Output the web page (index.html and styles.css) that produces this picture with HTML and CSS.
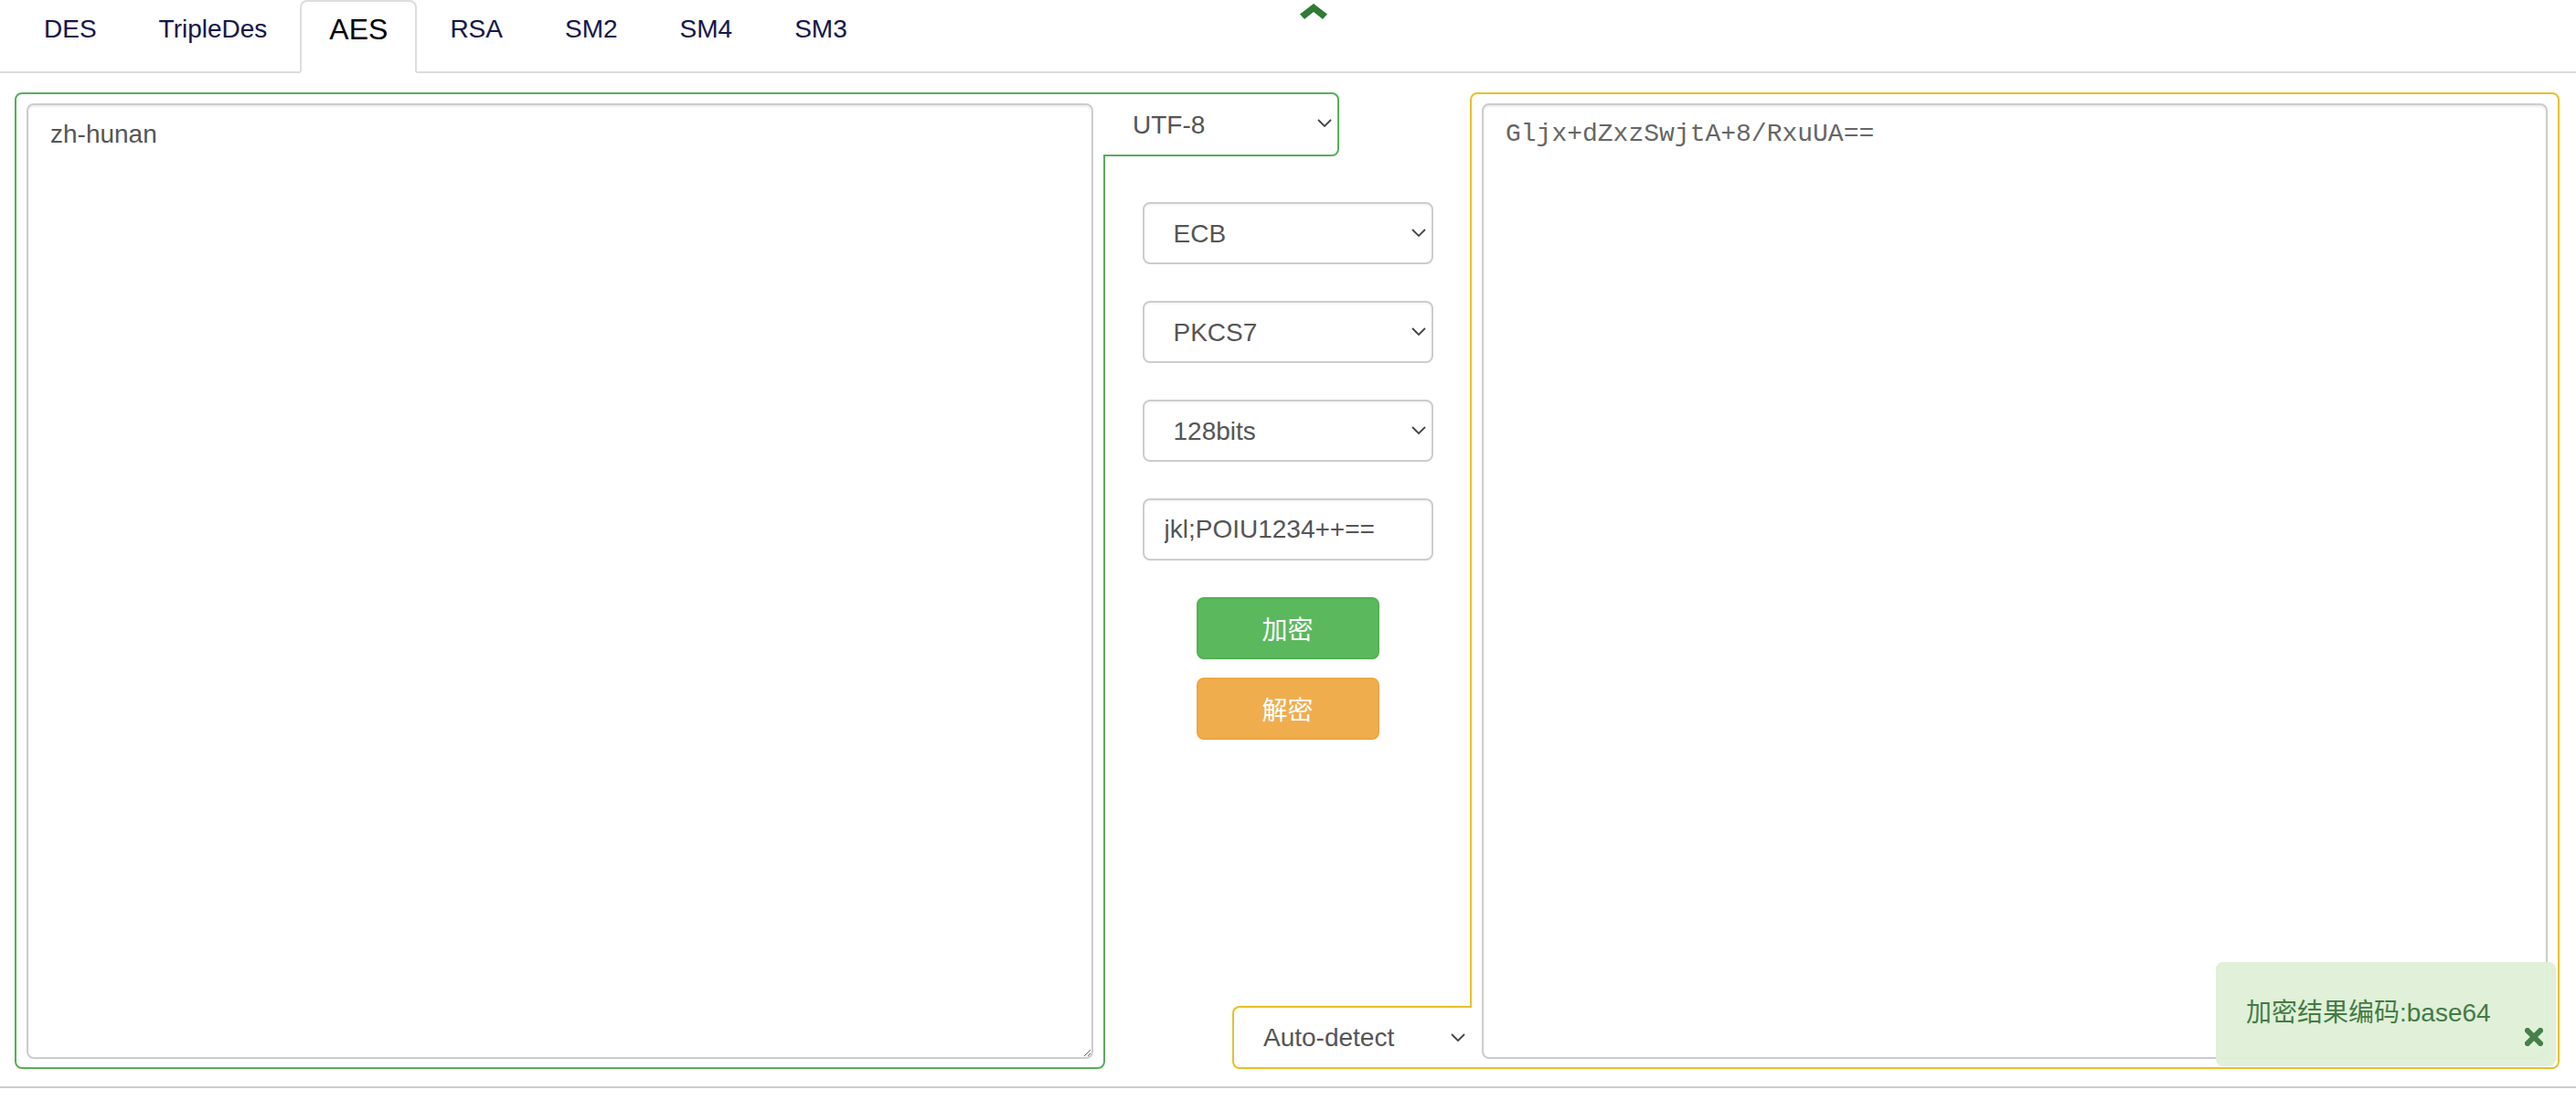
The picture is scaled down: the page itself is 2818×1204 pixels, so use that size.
FILE: index.html
```html
<!DOCTYPE html>
<html lang="zh-CN">
<head>
<meta charset="utf-8">
<title>AES</title>
<link rel="stylesheet" href="styles.css">
</head>
<body>
<nav class="tabs">
  <ul class="tab-list">
    <li class="tab"><a href="#">DES</a></li>
    <li class="tab"><a href="#">TripleDes</a></li>
    <li class="tab active"><a href="#">AES</a></li>
    <li class="tab"><a href="#">RSA</a></li>
    <li class="tab"><a href="#">SM2</a></li>
    <li class="tab"><a href="#">SM4</a></li>
    <li class="tab"><a href="#">SM3</a></li>
  </ul>
</nav>
<a class="collapse-toggle" href="#" aria-label="collapse">
  <svg viewBox="0 0 30 17" width="30" height="17"><polygon points="15,0 30,11.5 25,17 15,9 5,17 0,11.5" fill="#2f7a35"/></svg>
</a>

<main class="workspace">
  <section class="pane pane-in">
    <textarea class="text-area">zh-hunan</textarea>
  </section>

  <section class="controls">
    <div class="select-box charset">
      <select class="select"><option>UTF-8</option></select>
      <svg class="caret" viewBox="0 0 16 10"><polyline points="1,1 8,8 15,1" fill="none" stroke="#444" stroke-width="1.8"/></svg>
    </div>

    <div class="params">
      <div class="select-box field">
        <select class="select"><option>ECB</option></select>
        <svg class="caret" viewBox="0 0 16 10"><polyline points="1,1 8,8 15,1" fill="none" stroke="#444" stroke-width="1.8"/></svg>
      </div>
      <div class="select-box field">
        <select class="select"><option>PKCS7</option></select>
        <svg class="caret" viewBox="0 0 16 10"><polyline points="1,1 8,8 15,1" fill="none" stroke="#444" stroke-width="1.8"/></svg>
      </div>
      <div class="select-box field">
        <select class="select"><option>128bits</option></select>
        <svg class="caret" viewBox="0 0 16 10"><polyline points="1,1 8,8 15,1" fill="none" stroke="#444" stroke-width="1.8"/></svg>
      </div>
      <input class="field text-input" type="text" value="jkl;POIU1234++==">
      <div class="buttons">
        <button class="btn btn-encrypt" type="button">加密</button>
        <button class="btn btn-decrypt" type="button">解密</button>
      </div>
    </div>

    <div class="select-box detect">
      <select class="select"><option>Auto-detect</option></select>
      <svg class="caret" viewBox="0 0 16 10"><polyline points="1,1 8,8 15,1" fill="none" stroke="#444" stroke-width="1.8"/></svg>
    </div>
  </section>

  <section class="pane pane-out">
    <textarea class="text-area mono">Gljx+dZxzSwjtA+8/RxuUA==</textarea>
  </section>
</main>

<hr class="divider">

<div class="toast">
  <span class="toast-text">加密结果编码:base64</span>
  <svg class="toast-close" viewBox="0 0 20 20" width="20" height="20"><path d="M3 3 L17 17 M17 3 L3 17" stroke="#3f7a43" stroke-width="6" stroke-linecap="square"/></svg>
</div>
</body>
</html>
```

FILE: styles.css
```css
html, body {
  margin: 0;
  padding: 0;
  background: #fff;
}

body {
  font-family: "Liberation Sans", Arial, "Noto Sans CJK SC", sans-serif;
  font-size: 28px;
  line-height: 40px;
  color: #333;
  width: 2818px;
  height: 1204px;
  overflow: hidden;
}

/* ---------- tabs ---------- */
.tabs {
  border-bottom: 2px solid #ddd;
}

.tab-list {
  display: flex;
  margin: 0;
  padding: 0 0 0 16px;
  list-style: none;
}

.tab {
  margin-right: 4px;
  margin-bottom: -2px;
}

.tab a {
  display: block;
  padding: 10px 30px 26px;
  line-height: 40px;
  border: 2px solid transparent;
  border-radius: 8px 8px 0 0;
  color: #161649;
  text-decoration: none;
  text-shadow: 0 1px 4px rgba(0, 0, 0, 0.08);
}

.tab.active a {
  font-size: 32px;
  color: #000;
  background: #fff;
  border-color: #ddd #ddd transparent;
}

.collapse-toggle {
  position: absolute;
  left: 1422px;
  top: 4px;
  width: 30px;
  height: 17px;
  display: block;
}

.collapse-toggle svg {
  display: block;
}

/* ---------- workspace ---------- */
.workspace {
  display: grid;
  grid-template-columns: 1193px 399px 1192px;
  height: 1068px;
  margin-top: 21px;
  padding: 0 18px 0 16px;
}

.pane {
  box-sizing: border-box;
  border: 2px solid;
  padding: 10px 11px 9px 11px;
  background: #fff;
}

.pane-in {
  border-color: #59ad58;
  border-radius: 8px 0 8px 8px;
}

.pane-out {
  border-color: #e7bf2b;
  border-radius: 8px 8px 8px 0;
}

.text-area {
  display: block;
  box-sizing: border-box;
  width: 100%;
  height: 100%;
  margin: 0;
  padding: 12px 24px;
  border: 2px solid #ccc;
  border-radius: 8px;
  box-shadow: inset 0 2px 2px rgba(0, 0, 0, 0.075);
  font-family: "Liberation Sans", Arial, "Noto Sans CJK SC", sans-serif;
  font-size: 28px;
  line-height: 40px;
  color: #555;
  background: #fff;
  outline: none;
}

.text-area.mono {
  font-family: "Liberation Mono", "Courier New", monospace;
  color: #666;
}

/* ---------- middle controls ---------- */
.controls {
  position: relative;
  z-index: 1;
  display: flex;
  flex-direction: column;
}

.select-box {
  position: relative;
  box-sizing: border-box;
  background: #fff;
}

.select {
  -webkit-appearance: none;
  appearance: none;
  display: block;
  box-sizing: border-box;
  width: 100%;
  height: 100%;
  margin: 0;
  padding: 0 40px 0 32px;
  border: none;
  background: transparent;
  font-family: "Liberation Sans", Arial, sans-serif;
  font-size: 28px;
  color: #555;
  outline: none;
}

.caret {
  position: absolute;
  right: 6px;
  top: 50%;
  width: 16px;
  height: 10px;
  margin-top: -5px;
  pointer-events: none;
}

.charset {
  width: 258px;
  height: 70px;
  margin-left: -2px;
  border: 2px solid #59ad58;
  border-left: none;
  border-radius: 0 8px 8px 0;
}

.charset .caret {
  margin-top: -6px;
}

.params {
  display: flex;
  flex-direction: column;
  align-items: center;
  gap: 40px;
  margin-top: 50px;
}

.field {
  box-sizing: border-box;
  width: 318px;
  height: 68px;
  border: 2px solid #ccc;
  border-radius: 8px;
  box-shadow: inset 0 2px 2px rgba(0, 0, 0, 0.04);
}

.text-input {
  margin: 0;
  padding: 0 22px;
  font-family: "Liberation Sans", Arial, sans-serif;
  font-size: 28px;
  color: #555;
  background: #fff;
  outline: none;
}

.buttons {
  display: flex;
  flex-direction: column;
  gap: 20px;
}

.btn {
  box-sizing: border-box;
  width: 200px;
  height: 68px;
  margin: 0;
  padding: 0;
  border: 2px solid;
  border-radius: 8px;
  font-family: "Noto Sans CJK SC", "Liberation Sans", sans-serif;
  font-size: 28px;
  color: #fff;
  cursor: pointer;
}

.btn-encrypt {
  background: #5cb85c;
  border-color: #55b155;
}

.btn-decrypt {
  background: #f0ad4e;
  border-color: #eea744;
}

.detect {
  margin-top: auto;
  align-self: flex-end;
  width: 262px;
  height: 69px;
  margin-right: -2px;
  border: 2px solid #e7bf2b;
  border-right: none;
  border-radius: 8px 0 0 8px;
}

.detect .caret {
  right: 7px;
}

/* ---------- footer line ---------- */
.divider {
  margin: 19px 0 0;
  border: none;
  border-top: 2px solid #ccc;
  height: 0;
}

/* ---------- toast ---------- */
.toast {
  position: absolute;
  left: 2424px;
  top: 1052px;
  box-sizing: border-box;
  width: 372px;
  height: 114px;
  padding: 36px 0 0 33px;
  border-radius: 8px;
  background: #dff0d8;
  opacity: 0.96;
  color: #3c763d;
  font-family: "Liberation Sans", Arial, "Noto Sans CJK SC", sans-serif;
  font-size: 28px;
  line-height: 40px;
}

.toast-close {
  position: absolute;
  right: 14px;
  bottom: 22px;
}
```
